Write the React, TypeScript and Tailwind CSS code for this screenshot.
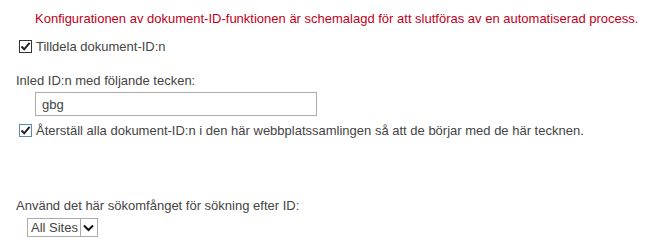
import React from "react";

function Check({ blue }: { blue?: boolean }) {
  return (
    <span
      className={`inline-flex w-[13px] h-[13px] border bg-white items-center justify-center shrink-0 ${
        blue ? "border-[#5b87b5]" : "border-[#333]"
      }`}
    >
      <svg width="11" height="11" viewBox="0 0 11 11">
        <path d="M1.5 5.5 L4.2 8.3 L9.6 1.8" fill="none" stroke="#222" strokeWidth="2" />
      </svg>
    </span>
  );
}

export default function App() {
  return (
    <div
      className="w-[656px] h-[252px] bg-white text-[#444] text-[13px] leading-none"
      style={{ fontFamily: '"Liberation Sans", Arial, sans-serif' }}
    >
      <div className="pl-[35px] pt-[12px] text-[#c00020]">
        Konfigurationen av dokument-ID-funktionen är schemalagd för att slutföras av en automatiserad process.
      </div>

      <div className="flex items-center gap-[4px] pl-[19px] mt-[15px]">
        <Check />
        <span>Tilldela dokument-ID:n</span>
      </div>

      <div className="pl-[16px] mt-[21px]">Inled ID:n med följande tecken:</div>
      <div className="pl-[35px] mt-[5px]">
        <div className="w-[282px] h-[24px] border border-[#ababab] flex items-center pl-[6px] text-[#444]">
          gbg
        </div>
      </div>

      <div className="flex items-center gap-[4px] pl-[19px] mt-[8px]">
        <Check blue />
        <span>Återställ alla dokument-ID:n i den här webbplatssamlingen så att de börjar med de här tecknen.</span>
      </div>

      <div className="pl-[16px] mt-[62px]">Använd det här sökomfånget för sökning efter ID:</div>
      <div className="pl-[27px] mt-[6px]">
        <div className="inline-flex h-[19px] border border-[#ababab] items-center">
          <span className="pl-[3px] pr-[2px]">All Sites</span>
          <span className="w-[17px] h-full border-l border-[#ababab] flex items-center justify-center">
            <svg width="11" height="8" viewBox="0 0 11 8">
              <path d="M1 1.5 L5.5 6 L10 1.5" fill="none" stroke="#111" strokeWidth="2" />
            </svg>
          </span>
        </div>
      </div>
    </div>
  );
}
